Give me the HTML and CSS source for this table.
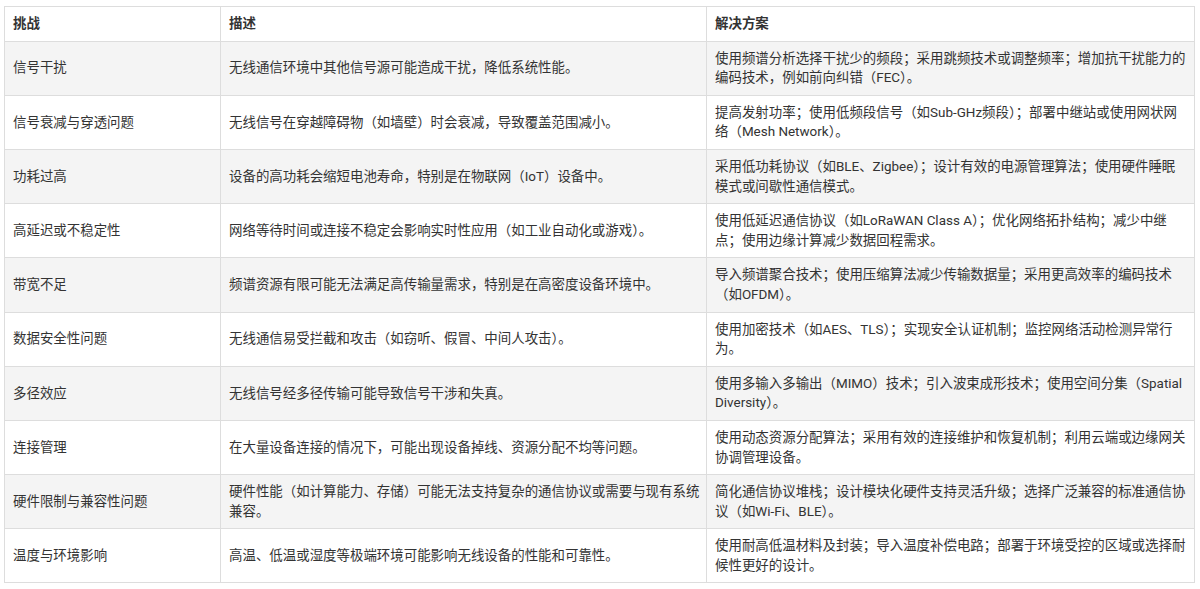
FILE: index.html
```html
<!DOCTYPE html>
<html lang="zh-CN">
<head>
<meta charset="utf-8">
<title>无线通信挑战</title>
<link rel="stylesheet" href="styles.css">
</head>
<body>
<div class="page">
<table class="grid">
<colgroup><col class="c1"><col class="c2"><col class="c3"></colgroup>
<thead>
<tr><th>挑战</th><th>描述</th><th>解决方案</th></tr>
</thead>
<tbody>
<tr><td>信号干扰</td><td>无线通信环境中其他信号源可能造成干扰，降低系统性能。</td><td>使用频谱分析选择干扰少的频段；采用跳频技术或调整频率；增加抗干扰能力的编码技术，例如前向纠错（FEC）。</td></tr>
<tr><td>信号衰减与穿透问题</td><td>无线信号在穿越障碍物（如墙壁）时会衰减，导致覆盖范围减小。</td><td>提高发射功率；使用低频段信号（如Sub-GHz频段）；部署中继站或使用网状网络（Mesh Network）。</td></tr>
<tr><td>功耗过高</td><td>设备的高功耗会缩短电池寿命，特别是在物联网（IoT）设备中。</td><td>采用低功耗协议（如BLE、Zigbee）；设计有效的电源管理算法；使用硬件睡眠模式或间歇性通信模式。</td></tr>
<tr><td>高延迟或不稳定性</td><td>网络等待时间或连接不稳定会影响实时性应用（如工业自动化或游戏）。</td><td>使用低延迟通信协议（如LoRaWAN Class A）；优化网络拓扑结构；减少中继点；使用边缘计算减少数据回程需求。</td></tr>
<tr><td>带宽不足</td><td>频谱资源有限可能无法满足高传输量需求，特别是在高密度设备环境中。</td><td>导入频谱聚合技术；使用压缩算法减少传输数据量；采用更高效率的编码技术（如OFDM）。</td></tr>
<tr><td>数据安全性问题</td><td>无线通信易受拦截和攻击（如窃听、假冒、中间人攻击）。</td><td>使用加密技术（如AES、TLS）；实现安全认证机制；监控网络活动检测异常行为。</td></tr>
<tr><td>多径效应</td><td>无线信号经多径传输可能导致信号干涉和失真。</td><td>使用多输入多输出（MIMO）技术；引入波束成形技术；使用空间分集（Spatial Diversity）。</td></tr>
<tr><td>连接管理</td><td>在大量设备连接的情况下，可能出现设备掉线、资源分配不均等问题。</td><td>使用动态资源分配算法；采用有效的连接维护和恢复机制；利用云端或边缘网关协调管理设备。</td></tr>
<tr><td>硬件限制与兼容性问题</td><td>硬件性能（如计算能力、存储）可能无法支持复杂的通信协议或需要与现有系统兼容。</td><td>简化通信协议堆栈；设计模块化硬件支持灵活升级；选择广泛兼容的标准通信协议（如Wi-Fi、BLE）。</td></tr>
<tr><td>温度与环境影响</td><td>高温、低温或湿度等极端环境可能影响无线设备的性能和可靠性。</td><td>使用耐高低温材料及封装；导入温度补偿电路；部署于环境受控的区域或选择耐候性更好的设计。</td></tr>
</tbody>
</table>
</div>
</body>
</html>
```
FILE: styles.css
```css
html, body {
  margin: 0;
  padding: 0;
  background: #ffffff;
}
.page {
  padding: 6px 6px 0 4px;
}
.grid {
  width: 1190px;
  table-layout: fixed;
  border-collapse: collapse;
  font-family: Roboto, "Noto Sans CJK SC", sans-serif;
  font-size: 13.45px;
  line-height: 19.6px;
  color: #333333;
}
.c1 { width: 216px; }
.c2 { width: 486px; }
.c3 { width: 488px; }
.grid th,
.grid td {
  border: 1px solid #dddddd;
  padding: 7px 8px;
  text-align: left;
  vertical-align: middle;
}
.grid td:nth-child(2) {
  padding-right: 5px;
}
.grid th {
  font-weight: 700;
  background: #ffffff;
}
.grid tbody tr:nth-child(odd) td {
  background: #f4f4f4;
}
```
